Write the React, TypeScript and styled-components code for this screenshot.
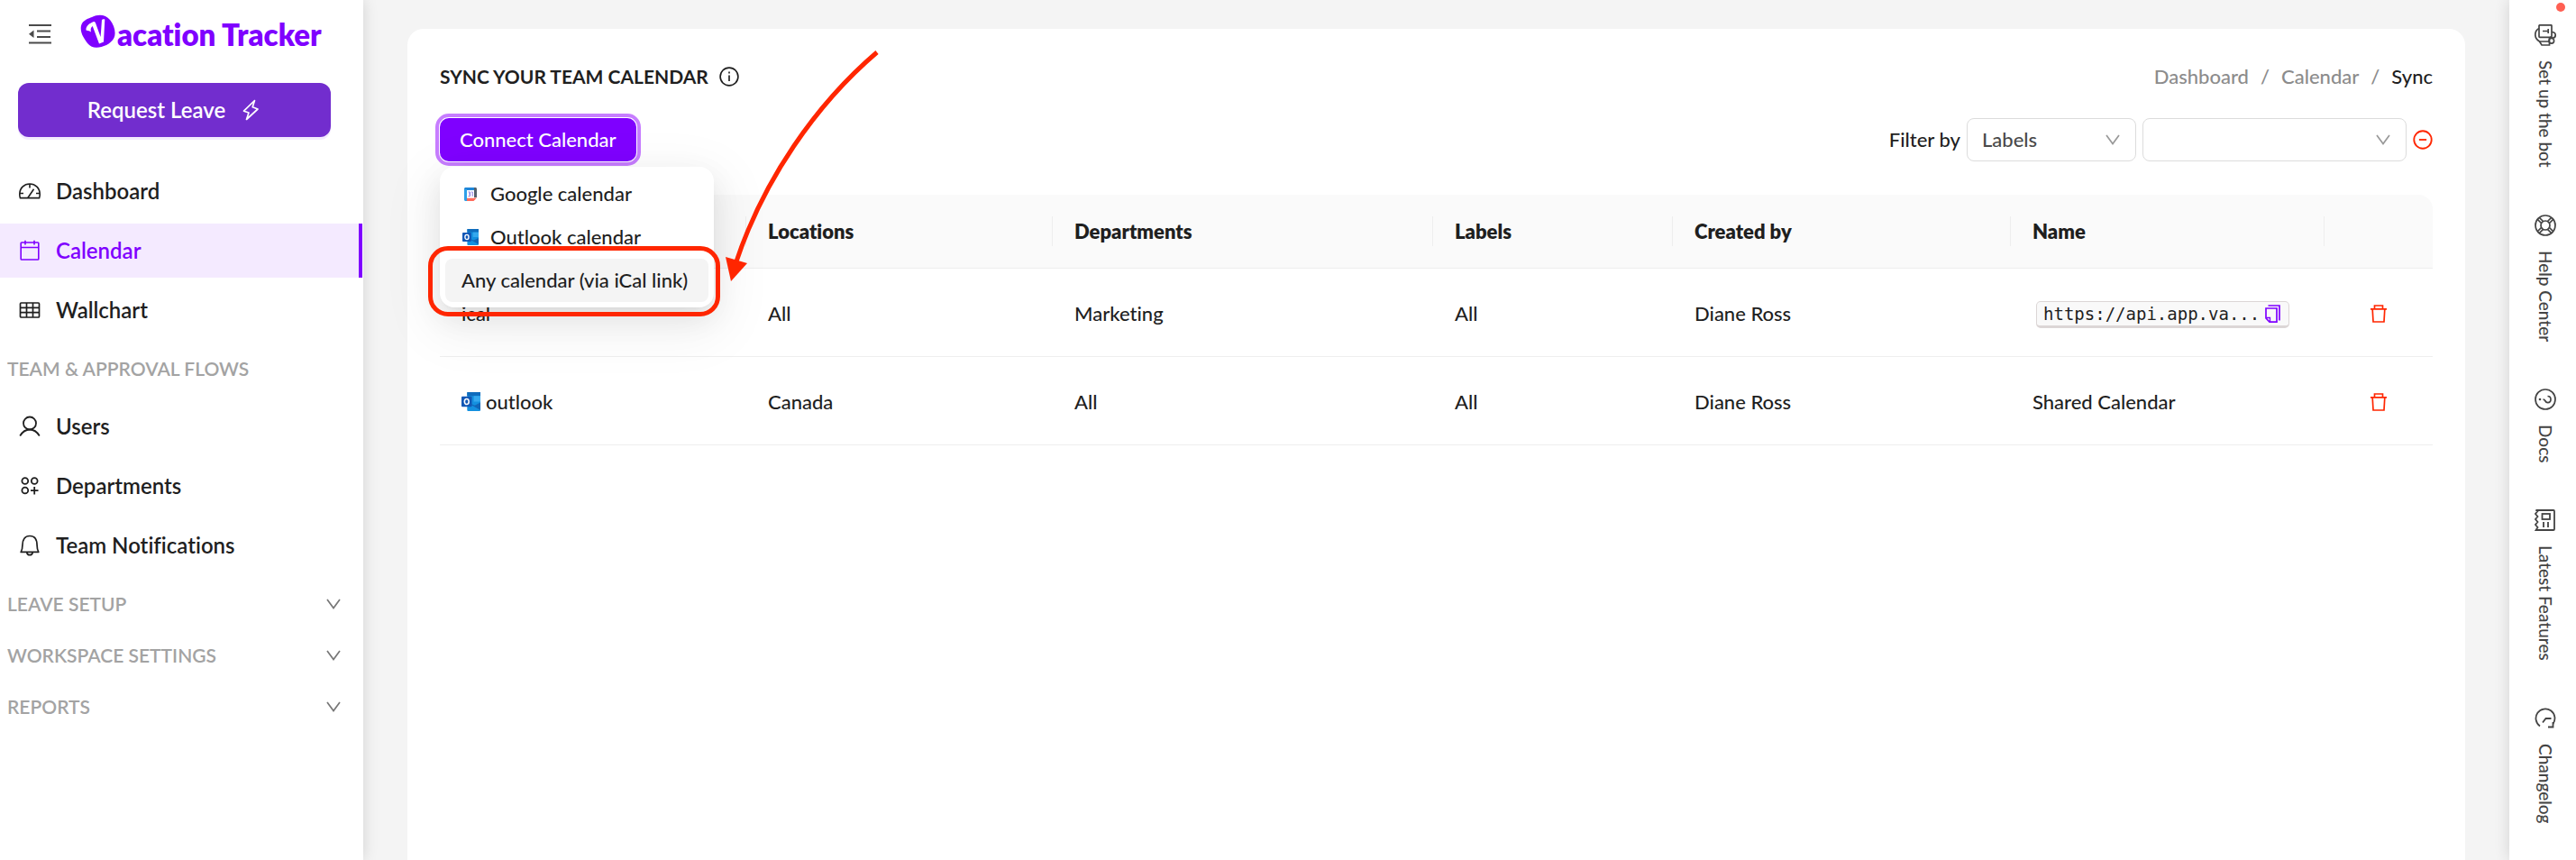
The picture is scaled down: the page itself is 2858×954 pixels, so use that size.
import React from 'react';
import styled, { createGlobalStyle, css } from 'styled-components';

const purple = '#7f00ff';
const ink = '#1f1f1f';
const red = '#ff2600';

const GlobalStyle = createGlobalStyle`
  * { box-sizing: border-box; }
  body {
    margin: 0;
    background: #f4f4f4;
    color: ${ink};
    font-family: Lato, "Liberation Sans", sans-serif;
    font-weight: 500;
    font-size: 22px;
    line-height: 32px;
    font-variant-ligatures: none;
  }
  button, select { font: inherit; color: inherit; font-variant-ligatures: none; }
  button { cursor: pointer; padding: 0; border: 0; background: none; }
  a { color: inherit; text-decoration: none; }
  svg { display: block; flex: none; }
`;

/* ---------- icons ---------- */

type IconProps = { size?: number; width?: number; children: React.ReactNode };

const Icon = ({ size = 24, width = 2, children }: IconProps) => (
  <svg width={size} height={size} viewBox="0 0 24 24" fill="none" stroke="currentColor" strokeWidth={width} aria-hidden="true">
    {children}
  </svg>
);

const FoldIcon = () => (
  <svg width="25" height="22" viewBox="0 0 25 22" fill="none" stroke="#4a4a4a" strokeWidth="2" aria-hidden="true">
    <path d="M0 1h25M9 7.500h15M9 14h15M0 20.500h25" />
    <path d="M0 10.800l5.500-4.200v8.400z" fill="#4a4a4a" stroke="none" />
  </svg>
);

const LogoMark = () => (
  <svg width="40" height="38" viewBox="0 0 40 38" aria-hidden="true">
    <path d="M13 3C20-.5 28-.2 33 6c5 6 7 15 4.500 20C34 33 25 36.500 18 36.700 10 36.500 7 31 3.500 25 .5 20-.2 14 2 10 4.500 6 9 4.500 13 3z" fill={purple} />
    <path d="M6.500 17.500c-.3-4.800 3.500-7.500 8.500-9.500 1 0 1.600.5 2 1.500l5.600 15.500 1.400-19c.8-1 2.300-1.100 3.300-.5L26 30.500l-5 2-7.300-19.500c-2 1.500-2.500 3.500-1.700 6.500-1.500-1-3-1.500-5.500-2z" fill="#fff" />
  </svg>
);

const BoltIcon = () => (
  <Icon size={24} width={1.7}>
    <path d="M16.500 1.500l-12 11.700 5.500 1.800-2.500 7.500L20 11l-5.800-2.200z" strokeLinejoin="round" />
  </Icon>
);

const DashboardIcon = () => (
  <Icon width={1.600}>
    <path d="M1.400 19.600a11.200 11.200 0 0 1-.6-4C.8 8.500 5.800 4 12 4s11.200 4.500 11.200 11.600a11.200 11.200 0 0 1-.6 4z" />
    <path d="M12 4v4.500M1 14.500h4M19 14.500h4M10 19.300l6.500-9.500" />
  </Icon>
);

const CalendarIcon = () => (
  <Icon width={1.600}>
    <rect x="2.200" y="3" width="19.600" height="19" rx="0.800" />
    <path d="M2.200 8.500h19.600M7 .8v4.600M17 .8v4.600" />
  </Icon>
);

const TableIcon = () => (
  <Icon width={1.700}>
    <rect x="1.500" y="4" width="21" height="16" rx="1" />
    <path d="M1.500 9.400h21M1.500 14.600h21M8.500 4v16M15.500 4v16" />
  </Icon>
);

const UserIcon = () => (
  <Icon width={1.800}>
    <circle cx="12" cy="8.500" r="7" />
    <path d="M1.200 22.500C3.800 18.200 7.500 15.500 12 15.500s8.200 2.700 10.800 7" />
  </Icon>
);

const DepartmentsIcon = () => (
  <Icon width={1.800}>
    <circle cx="6.800" cy="6.500" r="3.400" />
    <circle cx="17.200" cy="6.500" r="3.400" />
    <circle cx="6.800" cy="17" r="3.400" />
    <path d="M17.200 13v8.500M13 17.200h8.500" />
  </Icon>
);

const BellIcon = () => (
  <Icon width={1.700}>
    <path d="M2.200 19.400c1.300-2 1.700-4 1.700-7.400 0-6.500 2.800-10.500 8.100-10.500s8.100 4 8.100 10.500c0 3.400.4 5.400 1.700 7.400z" strokeLinejoin="round" />
    <path d="M8.800 20c.4 2 1.600 2.700 3.200 2.700s2.800-.7 3.200-2.700" />
  </Icon>
);

const ChevronIcon = () => (
  <svg width="16" height="12" viewBox="0 0 16 12" fill="none" stroke="currentColor" strokeWidth="1.700" aria-hidden="true">
    <path d="M1 1l7 9.500L15 1" />
  </svg>
);

const InfoIcon = () => (
  <Icon width={1.800} size={22}>
    <circle cx="12" cy="12" r="10.800" />
    <path d="M12 10.300v7.200M12 6v2.200" />
  </Icon>
);

const MinusIcon = () => (
  <Icon width={2} size={22}>
    <circle cx="12" cy="12" r="10.600" />
    <path d="M7.500 12h9" />
  </Icon>
);

const TrashIcon = () => (
  <svg width="18" height="20" viewBox="0 0 18 20" fill="none" stroke={red} strokeWidth="1.700" aria-hidden="true">
    <path d="M0 4.800h18M4.500 4.500V1h9v3.500M2.200 5l.8 14h12l.8-14" />
  </svg>
);

const CopyIcon = () => (
  <svg width="17" height="20" viewBox="0 0 17 20" fill="none" stroke={purple} strokeWidth="1.700" aria-hidden="true">
    <path d="M3.500 1H16v16.500" />
    <path d="M1 4h12v15.200H5L1 15z" />
    <path d="M1.500 14.500h4V19" strokeWidth="1.300" />
  </svg>
);

const GoogleCalendarIcon = () => (
  <svg width="14" height="15" viewBox="0 0 14 15" aria-hidden="true">
    <path d="M0 1.500C0 .7.700 0 1.500 0H12v3H0z" fill="#1f86d8" />
    <path d="M0 2h3v13H1.500C.7 15 0 14.300 0 13.500z" fill="#2d9fe8" />
    <path d="M11 0h1.500c.8 0 1.500.7 1.500 1.500V11h-3z" fill="#55606b" />
    <path d="M3 11.500h11L10.500 15H3z" fill="#ff6a5b" />
    <rect x="3" y="3" width="8" height="8.500" fill="#fff" />
    <path d="M4.500 5h2v4.500h-2M6.500 7h-1.500M8 5h1.200v4.800" fill="none" stroke="#7a6be0" strokeWidth="0.900" />
  </svg>
);

const OutlookIcon = ({ size = 18 }: { size?: number }) => (
  <svg width={size} height={size} viewBox="0 0 20 20" aria-hidden="true">
    <rect x="6" y="0" width="14" height="20" rx="1" fill="#1490df" />
    <rect x="6" y="0" width="14" height="4" fill="#0f6cbd" />
    <rect x="13" y="4" width="7" height="6" fill="#35a8ee" />
    <path d="M6 11l14 8V11l-6 3z" fill="#1166b8" />
    <rect x="0" y="4.500" width="11" height="11" rx="1" fill="#1257b5" />
    <ellipse cx="5.500" cy="10" rx="2.300" ry="2.900" fill="none" stroke="#fff" strokeWidth="1.500" />
  </svg>
);

const BotIcon = () => (
  <Icon width={1.700}>
    <rect x="5" y="0.800" width="14" height="13.500" rx="0.800" />
    <path d="M9 7.500h6.500M15.200 5v5" />
    <path d="M5 4.500C2 6 .8 8.500.8 11.500c0 3 1.700 5.500 4.700 7.500h11M5.500 19l2.500 4h8.500V14.500" />
    <path d="M19 8.500c2.500 0 4.200 1.400 4.200 3.600 0 1.900-1.400 3-3.200 3s-2.700-.8-3.200-1.200" />
    <circle cx="18.800" cy="18.300" r="2.800" />
  </Icon>
);

const HelpIcon = () => (
  <Icon width={1.700}>
    <circle cx="12" cy="12" r="11" />
    <circle cx="12" cy="12" r="5" />
    <path d="M3.300 5.300l4.200 4.200M5.300 3.300l4.200 4.200M20.700 5.300l-4.200 4.200M18.700 3.300l-4.200 4.200M3.300 18.700l4.200-4.200M5.300 20.700l4.200-4.200M20.700 18.700l-4.200-4.200M18.700 20.700l-4.200-4.200" />
  </Icon>
);

const DocsIcon = () => (
  <Icon width={1.700}>
    <circle cx="12" cy="12" r="11" />
    <path d="M14.500 8.500c2 0 3.500 1.500 3.500 3.600s-1.500 3.600-3.300 3.600c-1.700 0-2.500-1.200-3-2.200-.3-.8-1-1.300-2.200-1.300" />
    <circle cx="6" cy="12" r="1.300" fill="currentColor" stroke="none" />
  </Icon>
);

const FeaturesIcon = () => (
  <Icon width={1.800}>
    <path d="M1.500 1h19.500c.6 0 1 .4 1 1v20c0 .6-.4 1-1 1H1.500l2-3-2.500-3 2.500-3-2.500-3 2.500-3-2.500-3 2.500-3z" />
    <rect x="8.500" y="5" width="8.500" height="6" />
    <path d="M15 14v6M10 14v6" />
  </Icon>
);

const ChangelogIcon = () => (
  <Icon width={1.800}>
    <path d="M6 20.500A10.500 10.500 0 1 1 20.500 18" />
    <path d="M15 21.500h5.500V16" />
    <path d="M18.500 12h-6l-3.500 4.500" />
  </Icon>
);

/* ---------- shell ---------- */

const Shell = styled.div`
  display: grid;
  grid-template-columns: 403px minmax(0, 1fr) 74px;
  min-height: 100vh;
`;

const Sidebar = styled.aside`
  background: #fff;
  box-shadow: 0 0 16px rgba(0, 0, 0, 0.14);
`;

const Brand = styled.div`
  display: flex;
  align-items: center;
  gap: 32px;
  height: 76px;
  padding-left: 32px;
`;

const Logo = styled.a`
  display: flex;
  align-items: center;
  gap: 1px;
  color: ${purple};
  font-size: 33px;
  font-weight: 800;
  line-height: 40px;
`;

const LogoSymbol = styled.span`
  padding-bottom: 6px;
`;

const RequestButton = styled.button`
  display: flex;
  align-items: center;
  justify-content: center;
  gap: 16px;
  width: calc(100% - 56px);
  height: 60px;
  margin: 16px 36px 30px 20px;
  border-radius: 12px;
  background: #722dce;
  box-shadow: 0 3px 0 #f3eaff;
  color: #fff;
  font-size: 24px;
  font-weight: 600;
`;

const Nav = styled.nav`
  display: flex;
  flex-direction: column;
`;

const NavLink = styled.a<{ $active?: boolean }>`
  display: flex;
  align-items: center;
  gap: 17px;
  height: 60px;
  margin-bottom: 6px;
  margin-right: 1px;
  padding-left: 21px;
  font-size: 24px;
  font-weight: 600;
  ${(p) => p.$active && css`
    color: ${purple};
    background: #f4eaff;
    border-right: 4px solid ${purple};
  `}
`;

const SectionTitle = styled.h2`
  margin: 0;
  padding: 0 8px;
  height: 63px;
  color: #a3a3a3;
  font-size: 21px;
  font-weight: 600;
  line-height: 58px;
`;

const SectionToggle = styled.button`
  display: flex;
  align-items: center;
  justify-content: space-between;
  height: 57px;
  padding: 0 25px 0 8px;
  color: #a3a3a3;
  font-size: 21px;
  font-weight: 600;
  text-align: left;

  svg { color: #777; }
`;

const Rail = styled.aside`
  position: relative;
  display: flex;
  flex-direction: column;
  align-items: center;
  gap: 52px;
  padding: 27px 0 0 6px;
  background: #fff;
  box-shadow: 0 0 16px rgba(0, 0, 0, 0.14);
  color: #444;
`;

const RailLink = styled.a`
  display: flex;
  flex-direction: column;
  align-items: center;
  gap: 16px;
  font-size: 19px;
  line-height: 24px;
`;

const RailLabel = styled.span`
  writing-mode: vertical-rl;
`;

const AlertDot = styled.span`
  position: absolute;
  top: 3px;
  right: 12px;
  width: 10px;
  height: 10px;
  border-radius: 50%;
  background: #ff5f52;
`;

/* ---------- main card ---------- */

const Main = styled.main`
  display: flex;
  padding: 32px 49px 0;
`;

const Card = styled.section`
  flex: 1;
  min-width: 0;
  padding: 37px 36px;
  border-radius: 18px 18px 0 0;
  background: #fff;
`;

const Row = styled.div`
  display: flex;
  align-items: center;
  justify-content: space-between;
`;

const Title = styled.h1`
  display: flex;
  align-items: center;
  gap: 12px;
  margin: 0;
  font-size: 21px;
  font-weight: 700;
  line-height: 32px;
`;

const Crumbs = styled.nav`
  display: flex;
  gap: 13px;
  color: #8c8c8c;

  [aria-current] { color: ${ink}; }
`;

const Toolbar = styled(Row)`
  margin: 30px 0 37px;
`;

const Dropdown = styled.div`
  position: relative;
`;

const ConnectButton = styled.button`
  display: block;
  height: 48px;
  padding: 0 22px;
  border-radius: 10px;
  background: ${purple};
  color: #fff;
  outline: 4px solid #c77dff;
  outline-offset: 1px;
`;

const Menu = styled.ul`
  position: absolute;
  z-index: 2;
  top: 54px;
  left: 0;
  width: 304px;
  margin: 0;
  padding: 6px;
  list-style: none;
  border-radius: 16px;
  background: #fff;
  box-shadow: 0 12px 32px rgba(0, 0, 0, 0.08), 0 6px 12px -8px rgba(0, 0, 0, 0.12), 0 18px 56px 16px rgba(0, 0, 0, 0.05);
`;

const MenuItem = styled.button<{ $hovered?: boolean }>`
  display: flex;
  align-items: center;
  gap: 13px;
  width: 100%;
  height: 48px;
  padding: 0 18px;
  border-radius: 8px;
  background: ${(p) => (p.$hovered ? '#f4f4f4' : 'transparent')};
  text-align: left;
  white-space: nowrap;
`;

const MenuIcon = styled.span`
  display: flex;
  justify-content: center;
  width: 19px;
`;

const Highlight = styled.span`
  position: absolute;
  z-index: 3;
  top: 142px;
  left: -13px;
  width: 324px;
  height: 78px;
  border: 5px solid ${red};
  border-radius: 22px;
  pointer-events: none;
`;

const Arrow = styled.svg`
  position: absolute;
  z-index: 3;
  top: -81px;
  left: 312px;
  pointer-events: none;
`;

const Filters = styled.div`
  display: flex;
  align-items: center;
  gap: 7px;
`;

const SelectBox = styled.span<{ $width: number }>`
  position: relative;
  width: ${(p) => p.$width}px;
  color: #999;

  select {
    display: block;
    width: 100%;
    height: 48px;
    padding: 0 16px;
    appearance: none;
    border: 1px solid #dcdcdc;
    border-radius: 8px;
    background: #fff;
    color: #4a4a4a;
  }
  svg {
    position: absolute;
    top: 18px;
    right: 18px;
    pointer-events: none;
  }
`;

const ClearButton = styled.button`
  color: ${red};
`;

/* ---------- table ---------- */

const Table = styled.table`
  width: 100%;
  table-layout: fixed;
  border-collapse: separate;
  border-spacing: 0;
  text-align: left;
`;

const Th = styled.th`
  height: 82px;
  padding: 0;
  border-bottom: 1px solid #eeeeee;
  background: #fafafa;
  font-weight: 800;

  &:first-child { border-top-left-radius: 16px; }
  &:last-child { border-top-right-radius: 16px; }
`;

const HeadLabel = styled.div<{ $last?: boolean }>`
  height: 33px;
  padding-left: 24px;
  border-right: 1px solid ${(p) => (p.$last ? 'transparent' : '#eeeeee')};
  line-height: 34px;
`;

const Td = styled.td`
  height: 98px;
  padding: 2px 24px 0;
  border-bottom: 1px solid #eeeeee;
`;

const NameWithIcon = styled.span`
  display: flex;
  align-items: center;
  gap: 6px;
`;

const LinkTag = styled.code`
  display: inline-flex;
  align-items: center;
  gap: 6px;
  height: 30px;
  margin-left: 4px;
  padding: 0 9px 0 7px;
  border: 1px solid #dcd6d6;
  border-bottom-width: 3px;
  border-radius: 5px;
  background: #f9f9f9;
  font-family: "DejaVu Sans Mono", "Liberation Mono", monospace;
  font-size: 19px;
  font-weight: 400;
  line-height: 24px;
  vertical-align: middle;
`;

const DeleteButton = styled.button`
  display: flex;
  margin: 0 auto;
`;

const flows = [
  { label: 'Users', icon: <UserIcon /> },
  { label: 'Departments', icon: <DepartmentsIcon /> },
  { label: 'Team Notifications', icon: <BellIcon /> },
];

const pages = [
  { label: 'Dashboard', icon: <DashboardIcon /> },
  { label: 'Calendar', icon: <CalendarIcon />, active: true },
  { label: 'Wallchart', icon: <TableIcon /> },
];

const railLinks = [
  { label: 'Set up the bot', icon: <BotIcon /> },
  { label: 'Help Center', icon: <HelpIcon /> },
  { label: 'Docs', icon: <DocsIcon /> },
  { label: 'Latest Features', icon: <FeaturesIcon /> },
  { label: 'Changelog', icon: <ChangelogIcon /> },
];

const columns = [
  { label: '', width: 340 },
  { label: 'Locations', width: 340 },
  { label: 'Departments', width: 422 },
  { label: 'Labels', width: 266 },
  { label: 'Created by', width: 375 },
  { label: 'Name', width: 348 },
  { label: '', width: 120 },
];

const rows = [
  {
    calendar: 'ical',
    cells: ['All', 'Marketing', 'All', 'Diane Ross'],
    name: (
      <LinkTag>
        https://api.app.va...
        <button type="button" aria-label="Copy link"><CopyIcon /></button>
      </LinkTag>
    ),
  },
  {
    calendar: 'outlook',
    icon: <OutlookIcon size={21} />,
    cells: ['Canada', 'All', 'All', 'Diane Ross'],
    name: 'Shared Calendar',
  },
];

export default function App() {
  return (
    <>
      <GlobalStyle />
      <Shell>
        <Sidebar>
          <Brand>
            <button type="button" aria-label="Collapse menu"><FoldIcon /></button>
            <Logo href="#home"><LogoSymbol><LogoMark /></LogoSymbol>acation Tracker</Logo>
          </Brand>
          <RequestButton type="button">Request Leave <BoltIcon /></RequestButton>
          <Nav aria-label="Main">
            {pages.map((p) => (
              <NavLink key={p.label} href={'#' + p.label} $active={p.active}>{p.icon}{p.label}</NavLink>
            ))}
            <SectionTitle>TEAM &amp; APPROVAL FLOWS</SectionTitle>
            {flows.map((p) => (
              <NavLink key={p.label} href={'#' + p.label}>{p.icon}{p.label}</NavLink>
            ))}
            {['LEAVE SETUP', 'WORKSPACE SETTINGS', 'REPORTS'].map((s) => (
              <SectionToggle key={s} type="button" aria-expanded={false}>{s}<ChevronIcon /></SectionToggle>
            ))}
          </Nav>
        </Sidebar>

        <Main>
          <Card>
            <Row>
              <Title>SYNC YOUR TEAM CALENDAR <InfoIcon /></Title>
              <Crumbs aria-label="Breadcrumb">
                <a href="#dashboard">Dashboard</a><span>/</span>
                <a href="#calendar">Calendar</a><span>/</span>
                <span aria-current="page">Sync</span>
              </Crumbs>
            </Row>

            <Toolbar>
              <Dropdown>
                <ConnectButton type="button" aria-haspopup="menu" aria-expanded>Connect Calendar</ConnectButton>
                <Menu>
                  <li><MenuItem type="button"><MenuIcon><GoogleCalendarIcon /></MenuIcon>Google calendar</MenuItem></li>
                  <li><MenuItem type="button"><MenuIcon><OutlookIcon /></MenuIcon>Outlook calendar</MenuItem></li>
                  <li><MenuItem type="button" $hovered>Any calendar (via iCal link)</MenuItem></li>
                </Menu>
                <Highlight />
                <Arrow width="180" height="270" viewBox="0 0 180 270" aria-hidden="true">
                  <path d="M173 8C105 66 47 150 17 240" fill="none" stroke={red} strokeWidth="5" />
                  <path d="M5 235l24 7-18 20z" fill={red} />
                </Arrow>
              </Dropdown>
              <Filters>
                <label htmlFor="filter-kind">Filter by</label>
                <SelectBox $width={188}>
                  <select id="filter-kind" defaultValue="Labels"><option>Labels</option></select>
                  <ChevronIcon />
                </SelectBox>
                <SelectBox $width={293}>
                  <select aria-label="Filter value" defaultValue=""><option value="" /></select>
                  <ChevronIcon />
                </SelectBox>
                <ClearButton type="button" aria-label="Clear filter"><MinusIcon /></ClearButton>
              </Filters>
            </Toolbar>

            <Table>
              <colgroup>
                {columns.map((c, i) => <col key={i} width={c.width} />)}
              </colgroup>
              <thead>
                <tr>
                  {columns.map((c, i) => (
                    <Th key={i} scope="col"><HeadLabel $last={i === columns.length - 1}>{c.label}</HeadLabel></Th>
                  ))}
                </tr>
              </thead>
              <tbody>
                {rows.map((r) => (
                  <tr key={r.calendar}>
                    <Td><NameWithIcon>{r.icon}{r.calendar}</NameWithIcon></Td>
                    {r.cells.map((c, i) => <Td key={i}>{c}</Td>)}
                    <Td>{r.name}</Td>
                    <Td><DeleteButton type="button" aria-label={'Delete ' + r.calendar}><TrashIcon /></DeleteButton></Td>
                  </tr>
                ))}
              </tbody>
            </Table>
          </Card>
        </Main>

        <Rail>
          <AlertDot />
          {railLinks.map((l) => (
            <RailLink key={l.label} href={'#' + l.label}>{l.icon}<RailLabel>{l.label}</RailLabel></RailLink>
          ))}
        </Rail>
      </Shell>
    </>
  );
}
